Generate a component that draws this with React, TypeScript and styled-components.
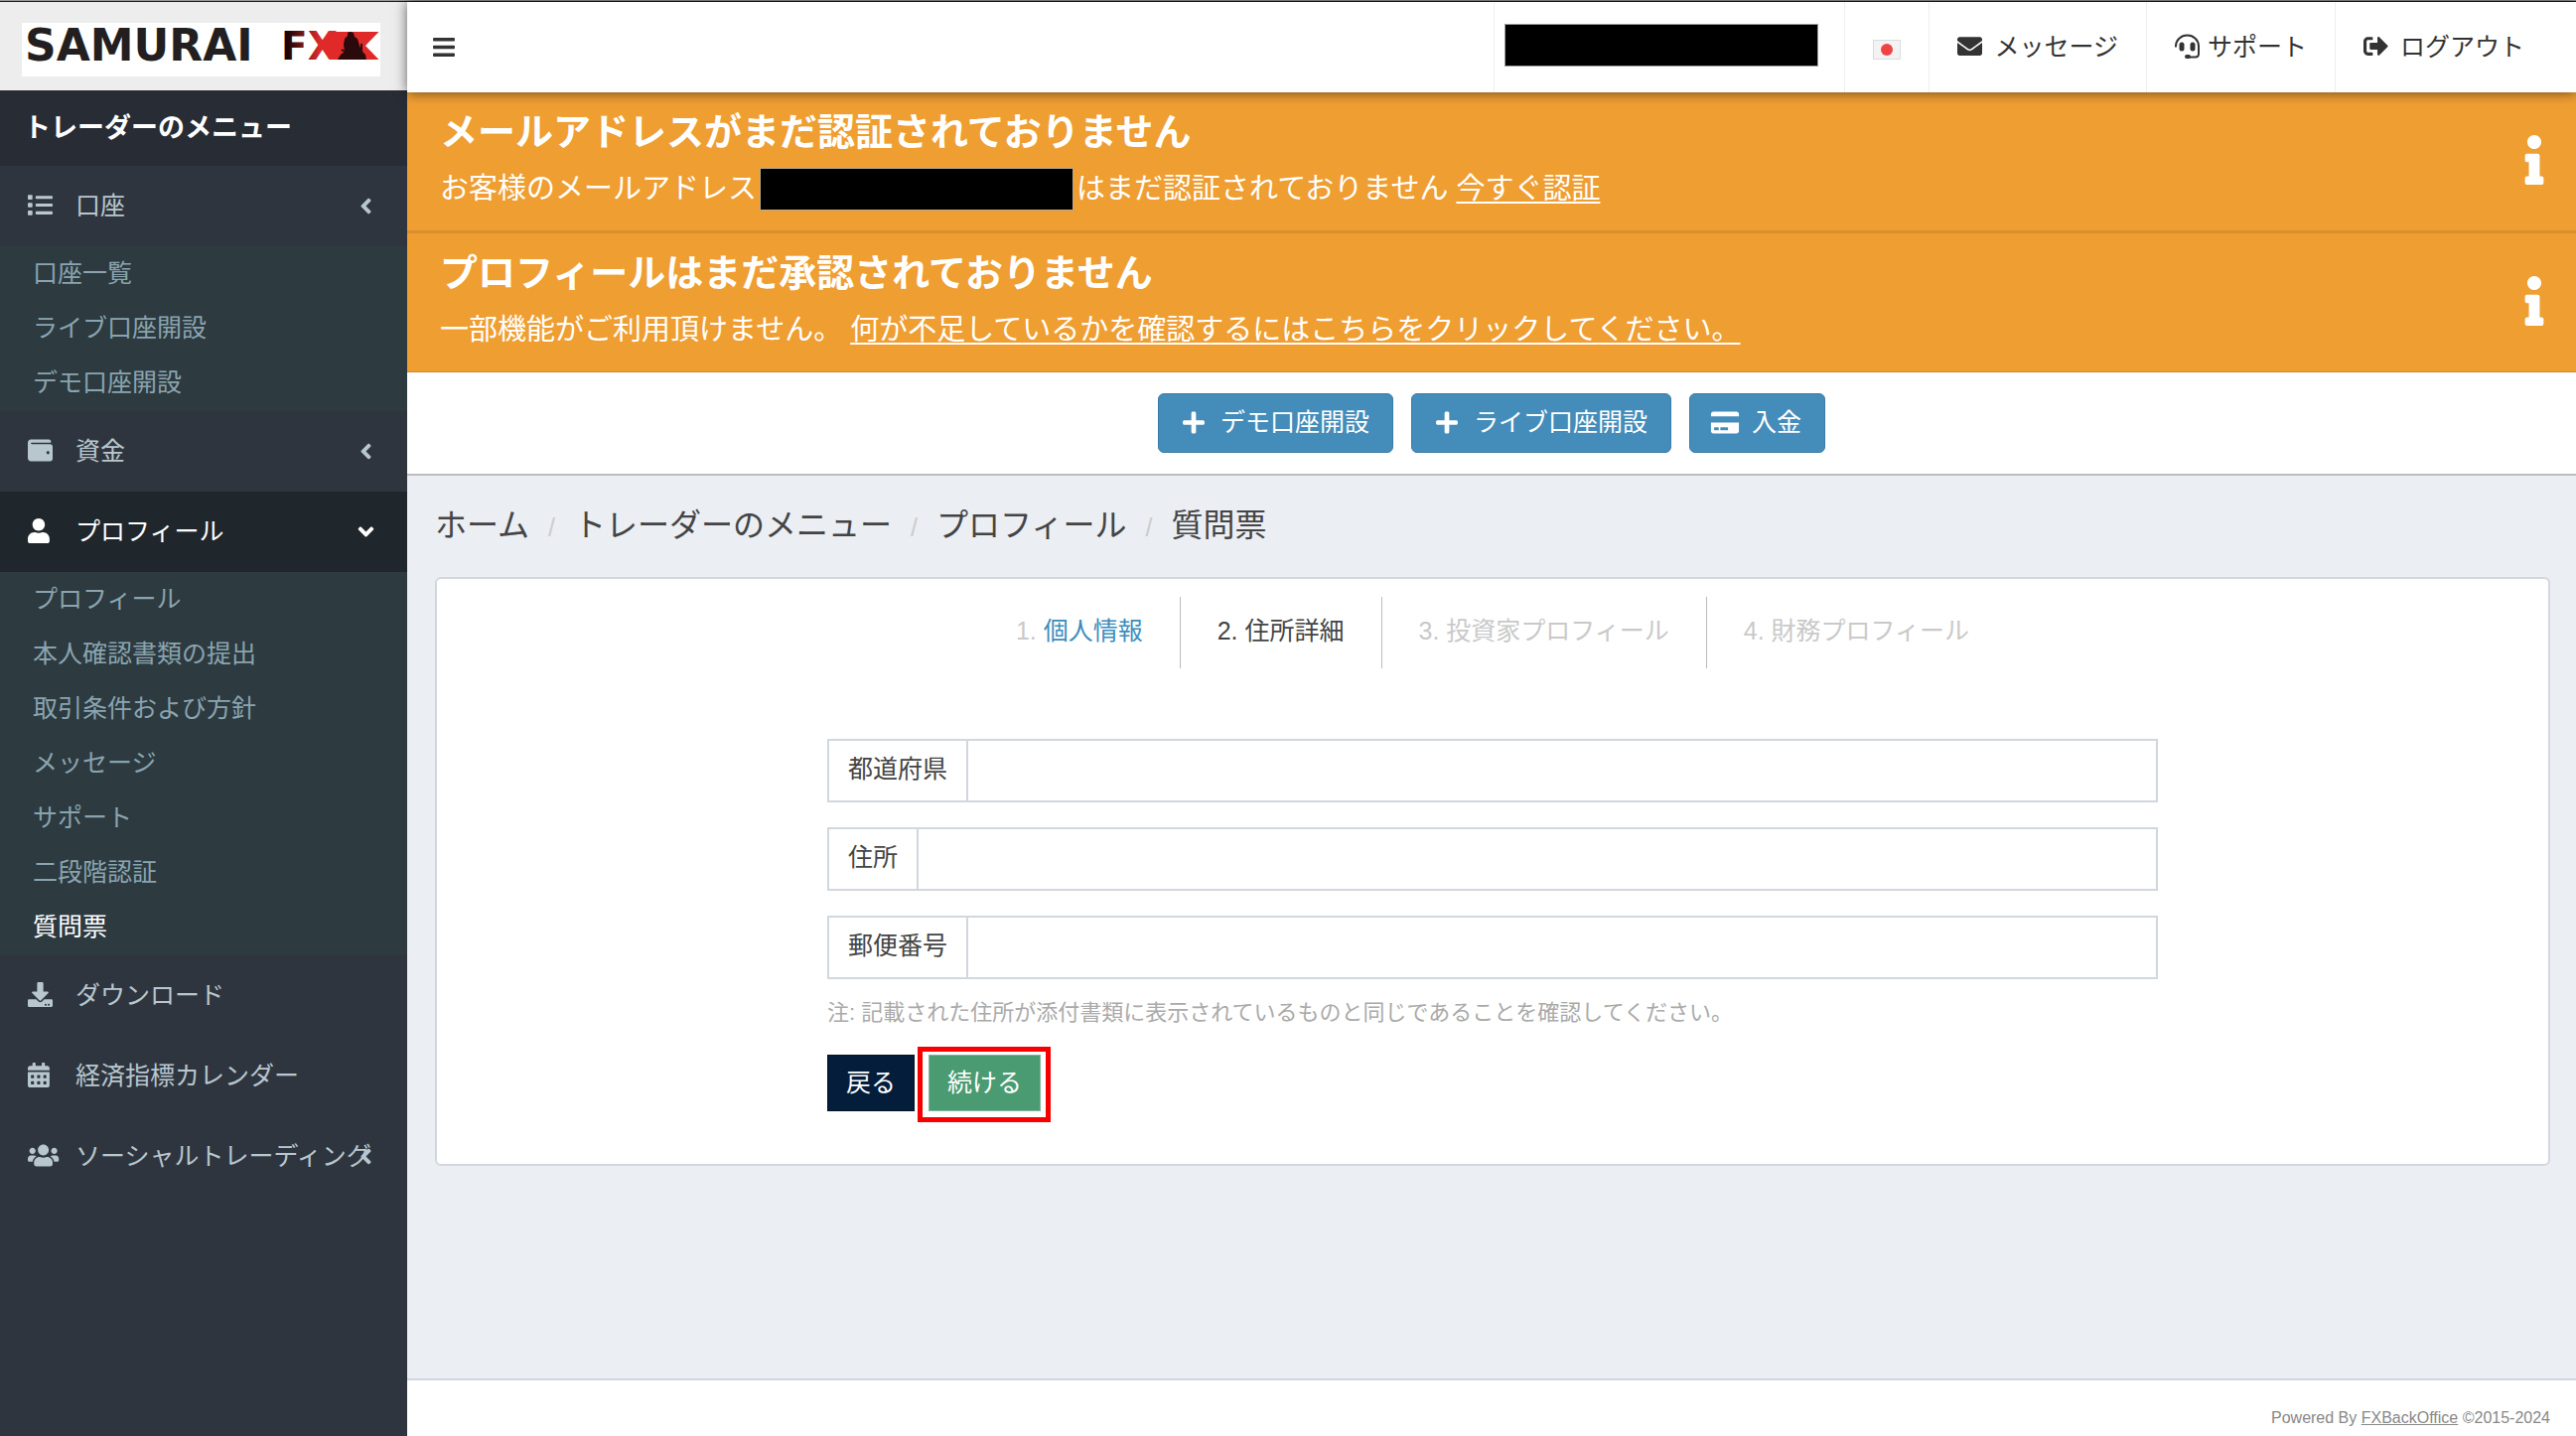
import React from "react";
import styled, { createGlobalStyle, css } from "styled-components";
import {
  FaAngleDown,
  FaAngleLeft,
  FaBars,
  FaCalendarAlt,
  FaCreditCard,
  FaDownload,
  FaEnvelope,
  FaInfo,
  FaList,
  FaPlus,
  FaSignOutAlt,
  FaUser,
  FaUsers,
  FaWallet,
} from "react-icons/fa";

const GlobalStyle = createGlobalStyle`
  *, *::before, *::after { box-sizing: border-box; }
  body {
    margin: 0;
    font-family: "Liberation Sans", "Noto Sans CJK JP", sans-serif;
    font-size: 25px;
    line-height: 36px;
    color: #333;
    background: #ebeef3;
  }
  a { color: inherit; text-decoration: none; }
  button, input { font: inherit; }
  ul, ol, h1, h2, p { margin: 0; padding: 0; list-style: none; }
`;

const Page = styled.div`
  min-height: 100vh;
  display: flex;
  flex-direction: column;
  border-top: 1px solid #9a9a9a;
`;

const Columns = styled.div`
  flex: 1;
  display: flex;
  border-top: 1px solid #0a0ab4;
`;

const iconSize = css`
  svg {
    display: block;
    flex: none;
    width: 25px;
    height: 25px;
  }
`;

/* Sidebar */

const Sidebar = styled.aside`
  flex: 0 0 410px;
  min-width: 0;
  background: #2f353f;
`;

const Brand = styled.a`
  display: flex;
  align-items: center;
  height: 89px;
  padding: 7px 22px 0;
  background: #ededed;

  svg {
    display: block;
    overflow: visible;
    background: #fff;
  }
`;

const MenuTitle = styled.h2`
  padding: 20px 24px;
  font-size: 27px;
  line-height: 36px;
  font-weight: 700;
  color: #fff;
  background: #282c35;
`;

const MenuLink = styled.a<{ $active?: boolean }>`
  position: relative;
  display: flex;
  align-items: center;
  height: 81px;
  padding: 0 0 2px 28px;
  white-space: nowrap;
  color: ${(p) => (p.$active ? "#fff" : "#b8c7ce")};
  background: ${(p) => (p.$active ? "#20272c" : "transparent")};
  ${iconSize}
`;

/* Glyphs of different widths share one left edge. */
const MenuIcon = styled.span`
  flex: 0 0 48px;

  svg {
    width: 32px;
  }
`;

const Chevron = styled.span`
  position: absolute;
  top: 28px;
  right: 29px;
`;

const SubMenu = styled.ul`
  padding-bottom: 1px;
  background: #2d3a40;
`;

const SubLink = styled.a<{ $active?: boolean }>`
  display: block;
  padding: 9px 33px 10px;
  color: ${(p) => (p.$active ? "#fff" : "#8aa4af")};
`;

/* Main column */

const Main = styled.div`
  flex: 1;
  min-width: 0;
  display: flex;
  flex-direction: column;
`;

const TopBar = styled.header`
  position: relative;
  z-index: 1;
  display: flex;
  height: 91px;
  padding: 0 24px 0 26px;
  background: #fff;
  box-shadow: 0 0 12px rgba(0, 0, 0, 0.6);
  ${iconSize}
`;

const Burger = styled.button`
  align-self: center;
  margin-right: auto;
  padding: 0;
  border: 0;
  background: none;
  color: #333;

  svg {
    width: 22px;
  }
`;

const UserSlot = styled.div`
  display: flex;
  align-items: center;
  padding: 0 26px 4px 10px;
  border-left: 1px solid #eee;
`;

const Redacted = styled.span`
  display: inline-block;
  width: 316px;
  height: 43px;
  background: #000;
  border: 1px solid #999;
`;

const TopLink = styled.a<{ $gap?: number }>`
  display: flex;
  align-items: center;
  gap: ${(p) => p.$gap ?? 12}px;
  padding: 0 28px 2px;
  border-left: 1px solid #eee;
  white-space: nowrap;
`;

const FlagLink = styled(TopLink)`
  padding-top: 6px;

  svg {
    width: 28px;
    height: 20px;
  }
`;

const Alert = styled.section`
  display: flex;
  align-items: center;
  justify-content: space-between;
  padding: 17px 32px 20px 33px;
  color: #fff;
  background: #ef9e32;

  & + & {
    border-top: 3px solid #d98f2d;
    border-bottom: 1px solid #d08a30;
  }

  > svg {
    display: block;
    width: 20px;
    height: 50px;
  }
`;

const AlertTitle = styled.h2`
  font-size: 38px;
  line-height: 46px;
  font-weight: 700;
`;

const AlertText = styled.p`
  display: flex;
  align-items: center;
  margin-top: 12px;
  font-size: 29px;
  line-height: 44px;

  a {
    margin-left: 8px;
    text-decoration: underline;
    text-decoration-thickness: 2px;
    text-underline-offset: 3px;
  }
  ${Redacted} {
    margin: 0 3px;
    border-color: #b9a98c;
  }
`;

const ActionBar = styled.nav`
  display: flex;
  justify-content: center;
  gap: 18px;
  padding: 21px 26px;
  background: #fff;
  border-bottom: 2px solid #bbbdc0;
`;

const ActionButton = styled.button`
  display: flex;
  align-items: center;
  gap: 11px;
  height: 60px;
  padding: 0 23px 2px 19px;
  color: #fff;
  background: #448cba;
  border: 1px solid #3a7ca6;
  border-radius: 6px;
  ${iconSize}

  svg {
    width: 32px;
  }
`;

const Content = styled.main`
  flex: 1;
  padding: 27px 26px 27px 28px;
`;

const Crumbs = styled.ol`
  display: flex;
  font-size: 32px;
  line-height: 46px;
  color: #444;

  li + li::before {
    content: "/";
    display: inline-block;
    width: 45px;
    padding-top: 1px;
    text-align: center;
    font-size: 25px;
    color: #ccc;
  }
`;

const Card = styled.section`
  margin-top: 27px;
  padding: 18px 26px 53px;
  background: #fff;
  border: 2px solid #d2d6de;
  border-radius: 6px;
`;

const Steps = styled.ol`
  display: flex;
  justify-content: center;
`;

const Step = styled.li<{ $current?: boolean }>`
  padding: 16px 37px 20px;
  color: ${(p) => (p.$current ? "#444" : "#c9c9c9")};
  white-space: nowrap;

  & + & {
    border-left: 1px solid #bbb;
  }
  a {
    color: #3c8dbc;
  }
`;

const Form = styled.form`
  max-width: 1340px;
  margin: 71px auto 0;
`;

const Field = styled.div`
  display: flex;
  height: 64px;
  margin-bottom: 25px;
  border: 2px solid #d2d6de;

  label {
    padding: 10px 19px 14px;
    border-right: 2px solid #d2d6de;
    white-space: nowrap;
    color: #444;
  }
  input {
    flex: 1;
    min-width: 0;
    padding: 0 20px;
    border: 0;
    outline: 0;
    background: #fff;
  }
`;

const Note = styled.p`
  margin-top: -6px;
  font-size: 22px;
  line-height: 30px;
  color: #aaa;
`;

const Buttons = styled.div`
  display: flex;
  gap: 14px;
  margin-top: 27px;
`;

const FormButton = styled.button<{ $primary?: boolean }>`
  height: 57px;
  padding: 0 18px 2px;
  color: #fff;
  background: ${(p) => (p.$primary ? "#4a9a72" : "#031d3b")};
  border: 1px solid ${(p) => (p.$primary ? "#7fb79b" : "#02142a")};
`;

const Highlight = styled.div`
  position: relative;

  &::after {
    content: "";
    position: absolute;
    inset: -8px -10px -11px -11px;
    border: 5px solid #f80000;
    pointer-events: none;
  }
`;

const Footer = styled.footer`
  padding: 26px 26px 6px;
  border-top: 2px solid #d2d6de;
  background: #fff;
  text-align: right;
  font-size: 16px;
  line-height: 24px;
  color: #888;

  a {
    text-decoration: underline;
  }
`;

function Logo() {
  return (
    <svg width="361" height="54" viewBox="0 0 361 54" role="img" aria-label="SAMURAI FX">
      <defs>
        <linearGradient id="ember" gradientUnits="userSpaceOnUse" x1="264" y1="0" x2="300" y2="0">
          <stop offset="0.1" stopColor="#1a0404" />
          <stop offset="1" stopColor="#dd2a2a" />
        </linearGradient>
      </defs>
      <g fontFamily="DejaVu Sans" fontWeight="700">
        <text x="3" y="38" fontSize="44" fill="#231f20">SAMURAI</text>
        <text x="261" y="37" fontSize="39" fill="url(#ember)">FX</text>
      </g>
      <path d="M313 9H359.500L346 23L359.500 37H313L301 23Z" fill="#e02a2a" />
      <path
        d="M328 10q3-2 6 0l1 4 3 2 2 7 2 5 4 4 1 5H318l3-5 4-3-1-7 1-6 3-3z"
        fill="#2a0a0a"
      />
      <path d="M322 27l8 5M337 20l3 10M342 21v12" stroke="#2a0a0a" strokeWidth="2" />
    </svg>
  );
}

function Headset() {
  return (
    <svg viewBox="0 0 25 25" fill="currentColor" aria-hidden="true">
      <path
        d="M1 13.500V12.500A11.500 11 0 0 1 24 12.500V20q0 3.500-3.500 3.500H14"
        fill="none"
        stroke="currentColor"
        strokeWidth="2"
      />
      <rect x="4.500" y="8.500" width="5" height="9" rx="2.500" />
      <rect x="15.500" y="8.500" width="5" height="9" rx="2.500" />
      <rect x="10" y="21" width="6" height="4" rx="2" />
    </svg>
  );
}

function Flag() {
  return (
    <svg viewBox="0 0 28 20" role="img" aria-label="日本語">
      <rect x="0.500" y="0.500" width="27" height="19" fill="#f3f3f3" stroke="#dcdcdc" />
      <circle cx="14" cy="10" r="6" fill="#f04444" />
    </svg>
  );
}

type Entry = {
  label: string;
  icon: React.ReactNode;
  active?: boolean;
  chevron?: "left" | "down";
  children?: string[];
};

const alignLeft = { preserveAspectRatio: "xMinYMid meet" };

const menu: Entry[] = [
  {
    label: "口座",
    icon: <FaList {...alignLeft} />,
    chevron: "left",
    children: ["口座一覧", "ライブ口座開設", "デモ口座開設"],
  },
  { label: "資金", icon: <FaWallet {...alignLeft} />, chevron: "left" },
  {
    label: "プロフィール",
    icon: <FaUser {...alignLeft} />,
    active: true,
    chevron: "down",
    children: [
      "プロフィール",
      "本人確認書類の提出",
      "取引条件および方針",
      "メッセージ",
      "サポート",
      "二段階認証",
      "質問票",
    ],
  },
  { label: "ダウンロード", icon: <FaDownload {...alignLeft} /> },
  { label: "経済指標カレンダー", icon: <FaCalendarAlt {...alignLeft} /> },
  { label: "ソーシャルトレーディング", icon: <FaUsers {...alignLeft} />, chevron: "left" },
];

const currentPage = "質問票";

const fields = [
  { id: "state", label: "都道府県" },
  { id: "address", label: "住所" },
  { id: "zip", label: "郵便番号" },
];

export default function App() {
  return (
    <Page>
      <GlobalStyle />
      <Columns>
        <Sidebar>
          <Brand href="#">
            <Logo />
          </Brand>
          <MenuTitle>トレーダーのメニュー</MenuTitle>
          <nav>
            <ul>
              {menu.map((entry) => (
                <li key={entry.label}>
                  <MenuLink href="#" $active={entry.active}>
                    <MenuIcon>{entry.icon}</MenuIcon>
                    {entry.label}
                    {entry.chevron && (
                      <Chevron>
                        {entry.chevron === "down" ? <FaAngleDown /> : <FaAngleLeft />}
                      </Chevron>
                    )}
                  </MenuLink>
                  {entry.children && (
                    <SubMenu>
                      {entry.children.map((child) => (
                        <li key={child}>
                          <SubLink href="#" $active={child === currentPage}>
                            {child}
                          </SubLink>
                        </li>
                      ))}
                    </SubMenu>
                  )}
                </li>
              ))}
            </ul>
          </nav>
        </Sidebar>

        <Main>
          <TopBar>
            <Burger type="button" aria-label="メニュー">
              <FaBars />
            </Burger>
            <UserSlot>
              <Redacted />
            </UserSlot>
            <FlagLink href="#">
              <Flag />
            </FlagLink>
            <TopLink href="#">
              <FaEnvelope />
              メッセージ
            </TopLink>
            <TopLink href="#" $gap={8}>
              <Headset />
              サポート
            </TopLink>
            <TopLink href="#">
              <FaSignOutAlt />
              ログアウト
            </TopLink>
          </TopBar>

          <Alert>
            <div>
              <AlertTitle>メールアドレスがまだ認証されておりません</AlertTitle>
              <AlertText>
                お客様のメールアドレス
                <Redacted />
                はまだ認証されておりません
                <a href="#">今すぐ認証</a>
              </AlertText>
            </div>
            <FaInfo />
          </Alert>
          <Alert>
            <div>
              <AlertTitle>プロフィールはまだ承認されておりません</AlertTitle>
              <AlertText>
                一部機能がご利用頂けません。
                <a href="#">何が不足しているかを確認するにはこちらをクリックしてください。</a>
              </AlertText>
            </div>
            <FaInfo />
          </Alert>

          <ActionBar>
            <ActionButton type="button">
              <FaPlus />
              デモ口座開設
            </ActionButton>
            <ActionButton type="button">
              <FaPlus />
              ライブ口座開設
            </ActionButton>
            <ActionButton type="button">
              <FaCreditCard />
              入金
            </ActionButton>
          </ActionBar>

          <Content>
            <Crumbs>
              <li>
                <a href="#">ホーム</a>
              </li>
              <li>
                <a href="#">トレーダーのメニュー</a>
              </li>
              <li>
                <a href="#">プロフィール</a>
              </li>
              <li>質問票</li>
            </Crumbs>

            <Card>
              <Steps>
                <Step>
                  1. <a href="#">個人情報</a>
                </Step>
                <Step $current>2. 住所詳細</Step>
                <Step>3. 投資家プロフィール</Step>
                <Step>4. 財務プロフィール</Step>
              </Steps>

              <Form onSubmit={(e) => e.preventDefault()}>
                {fields.map((f) => (
                  <Field key={f.id}>
                    <label htmlFor={f.id}>{f.label}</label>
                    <input id={f.id} type="text" />
                  </Field>
                ))}
                <Note>
                  注: 記載された住所が添付書類に表示されているものと同じであることを確認してください。
                </Note>
                <Buttons>
                  <FormButton type="button">戻る</FormButton>
                  <Highlight>
                    <FormButton type="submit" $primary>
                      続ける
                    </FormButton>
                  </Highlight>
                </Buttons>
              </Form>
            </Card>
          </Content>

          <Footer>
            Powered By <a href="#">FXBackOffice</a> ©2015-2024
          </Footer>
        </Main>
      </Columns>
    </Page>
  );
}
